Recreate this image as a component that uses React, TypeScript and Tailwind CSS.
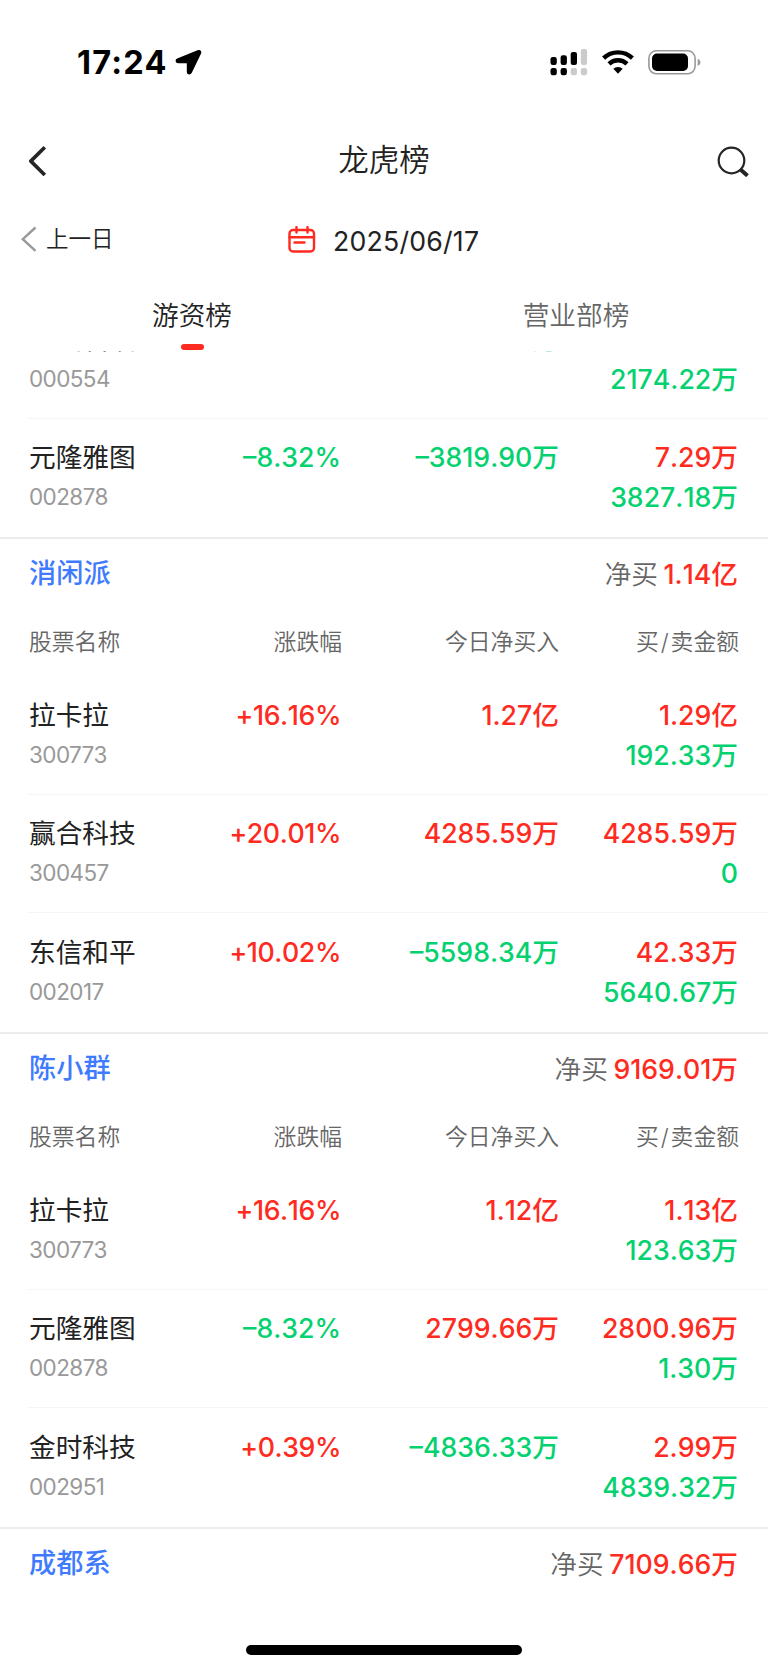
interface IStock {
  name: string;
  code: string;
  change: string;
  net: string;
  buy: string;
  sell: string;
}

interface IGroup {
  name: string;
  total: string;
  stocks: IStock[];
}

const previousStocks: IStock[] = [
  { name: "泰山石油", code: "000554", change: "", net: "–2174.22万", buy: "", sell: "2174.22万" },
  { name: "元隆雅图", code: "002878", change: "–8.32%", net: "–3819.90万", buy: "7.29万", sell: "3827.18万" },
];

const groups: IGroup[] = [
  {
    name: "消闲派",
    total: "1.14亿",
    stocks: [
      { name: "拉卡拉", code: "300773", change: "+16.16%", net: "1.27亿", buy: "1.29亿", sell: "192.33万" },
      { name: "赢合科技", code: "300457", change: "+20.01%", net: "4285.59万", buy: "4285.59万", sell: "0" },
      { name: "东信和平", code: "002017", change: "+10.02%", net: "–5598.34万", buy: "42.33万", sell: "5640.67万" },
    ],
  },
  {
    name: "陈小群",
    total: "9169.01万",
    stocks: [
      { name: "拉卡拉", code: "300773", change: "+16.16%", net: "1.12亿", buy: "1.13亿", sell: "123.63万" },
      { name: "元隆雅图", code: "002878", change: "–8.32%", net: "2799.66万", buy: "2800.96万", sell: "1.30万" },
      { name: "金时科技", code: "002951", change: "+0.39%", net: "–4836.33万", buy: "2.99万", sell: "4839.32万" },
    ],
  },
  { name: "成都系", total: "7109.66万", stocks: [] },
];

const isDown = (value: string) => value.startsWith("–");

const Amount = ({ value, down }: { value: string; down: boolean }) => (
  <span
    className={`block min-h-[40px] text-right text-[26.7px] leading-[40px] font-[460] whitespace-nowrap [font-kerning:none] ${
      down ? "text-[#04d16f]" : "text-[#ff2a20]"
    } ${value.startsWith("+") ? "tracking-[-0.4px]" : ""}`}
  >
    {value}
  </span>
);

const StatusBar = () => (
  <div className="flex h-[116px] items-start justify-between pt-[42px] pr-[67px] pl-[77px]">
    <div className="flex items-center">
      <span className="w-[98px] text-[32.5px] leading-[41px] font-bold tracking-[1.2px] text-black">
        17:24
      </span>
      <svg width="27" height="27" viewBox="0 0 27 27">
        <path
          d="M23.6 2.2 2.6 10.7c-1.3.5-1 2.4.5 2.4h9.2c.4 0 .7.3.7.7v9.2c0 1.5 2 1.8 2.6.4L25 3.9c.5-1.1-.4-2.1-1.4-1.7Z"
          stroke="#000"
          strokeWidth="2.4"
          strokeLinejoin="round"
        />
      </svg>
    </div>
    <div className="flex items-center pt-[7px]">
      <svg width="38" height="27" viewBox="0 0 38 27">
        <rect x="0.5" y="8" width="6.3" height="8" rx="2.2" />
        <rect x="10.6" y="6.3" width="6.3" height="9.7" rx="2.2" />
        <rect x="20.7" y="3" width="6.3" height="13" rx="2.2" />
        <rect x="30.8" y="0" width="6.3" height="16" rx="2.2" fill="#cbcbcb" />
        <rect x="0.5" y="19" width="6.3" height="7.3" rx="2.2" />
        <rect x="10.6" y="19" width="6.3" height="7.3" rx="2.2" />
        <rect x="20.7" y="19" width="6.3" height="7.3" rx="2.2" fill="#cbcbcb" />
        <rect x="30.8" y="19" width="6.3" height="7.3" rx="2.2" fill="#cbcbcb" />
      </svg>
      <svg className="ml-[14px]" width="32" height="27" viewBox="0 0 32 27" fill="none" stroke="#000">
        <path d="M1.6 9.2a20.7 20.7 0 0 1 28.8 0" strokeWidth="4.4" />
        <path d="M7 14.9a13 13 0 0 1 18 0" strokeWidth="4.4" />
        <path d="M11.3 19.8a6.8 6.8 0 0 1 9.4 0L16 24.7Z" fill="#000" stroke="none" />
      </svg>
      <svg className="ml-[14px]" width="53" height="27" viewBox="0 0 53 27">
        <rect x="0.9" y="1.8" width="46.2" height="23" rx="7.5" fill="none" stroke="#999" strokeWidth="1.6" />
        <rect x="4" y="4.6" width="36" height="17.4" rx="5" />
        <path d="M49.7 9.7c1.7.7 2.7 2 2.7 3.6s-1 2.9-2.7 3.6Z" fill="#999" />
      </svg>
    </div>
  </div>
);

const TitleBar = () => (
  <div className="grid h-[88px] grid-cols-3 items-center px-[17px]">
    <svg className="ml-[10px]" width="32" height="32" viewBox="0 0 32 32" fill="none" stroke="#252525" strokeWidth="3.6">
      <path d="M17.8 3.3 3.8 17.1l14 13.9" strokeLinejoin="round" />
    </svg>
    <h1 className="pb-px text-center text-[30.5px] font-[350] text-[#222]">龙虎榜</h1>
    <svg className="justify-self-end" width="34" height="34" viewBox="0 0 34 34" fill="none" stroke="#252525">
      <circle cx="14.5" cy="17.5" r="12.8" strokeWidth="2.2" />
      <path d="m23.5 26.5 7 6.2" strokeWidth="4" />
    </svg>
  </div>
);

const DateBar = () => (
  <div className="grid h-[70px] grid-cols-[288px_1fr] items-center">
    <button className="flex items-center pl-[21px]">
      <svg width="16" height="26" viewBox="0 0 16 26" fill="none" stroke="#999" strokeWidth="2.4">
        <path d="M14.5 1.5 1.8 13.2l12.7 11.6" />
      </svg>
      <span className="ml-[9px] text-[22.5px] font-[350] text-[#222]">上一日</span>
    </button>
    <div className="flex items-center">
      <svg className="mt-[2px]" width="28" height="28" viewBox="0 0 28 28" fill="none" stroke="#ff2a20" strokeWidth="2.4">
        <rect x="1.5" y="4" width="24.5" height="21.5" rx="3.5" />
        <path d="M1.5 11.2H26M8.5 1v5.5M19.5 1v5.5M6.5 16.5h10" strokeLinecap="round" />
      </svg>
      <span className="ml-[17px] pt-1 text-[26.7px] font-normal tracking-[0.2px] text-[#222] [font-kerning:none]">
        2025/06/17
      </span>
    </div>
  </div>
);

const Tabs = () => (
  <div className="grid h-[77px] grid-cols-2 text-center text-[26.7px] leading-[40px] font-[350]">
    <div className="flex flex-col items-center pt-[21px] text-[#222]">
      游资榜
      <span className="mt-[9px] h-[6px] w-[23px] shrink-0 rounded-full bg-[#ff2a20]" />
    </div>
    <div className="pt-[21px] text-[#666]">营业部榜</div>
  </div>
);

const StockRow = ({ stock, last }: { stock: IStock; last: boolean }) => (
  <div className="pl-[28px]">
    <div
      className={`grid h-[118.6px] grid-cols-[150px_163px_218px_179px] border-b pt-[18.5px] ${
        last ? "border-transparent" : "border-[#f6f6f6]"
      }`}
    >
      <div className="pl-px">
        <div className="text-[26.7px] leading-[40px] text-[#222]">{stock.name}</div>
        <div className="text-[22.5px] leading-[40px] font-normal tracking-[-0.6px] text-[#999]">{stock.code}</div>
      </div>
      <Amount value={stock.change} down={isDown(stock.change)} />
      <Amount value={stock.net} down={isDown(stock.net)} />
      <div>
        <Amount value={stock.buy} down={false} />
        <Amount value={stock.sell} down />
      </div>
    </div>
  </div>
);

const Group = ({ group }: { group: IGroup }) => (
  <section className="h-[495px] border-t-2 border-[#ececee]">
    <div className="flex h-[69px] items-center justify-between pr-[30px] pl-[29px] text-[26.7px]">
      <h2 className="pt-[2px] text-[27.2px] font-[450] text-[#3f7bff]">{group.name}</h2>
      <div className="font-medium text-[#ff2a20] [font-kerning:none]">
        <span className="mr-[5.5px] font-[350] text-[#666]">净买</span>
        {group.total}
      </div>
    </div>
    {group.stocks.length > 0 && (
      <div className="grid h-[68px] grid-cols-[150px_164px_217px_180px] pt-[14px] pl-[28px] text-right text-[22.8px] leading-[40px] font-[350] text-[#666]">
        <span className="pl-px text-left">股票名称</span>
        <span>涨跌幅</span>
        <span>今日净买入</span>
        <span>
          买<span className="mx-[2px]">/</span>卖金额
        </span>
      </div>
    )}
    {group.stocks.map((stock, index) => (
      <StockRow key={stock.code} stock={stock} last={index === group.stocks.length - 1} />
    ))}
  </section>
);

const App = () => {
  return (
    <div className="relative flex h-[1670px] w-[768px] flex-col overflow-hidden bg-white font-['Inter','Noto_Sans_CJK_SC',sans-serif]">
      <header className="shrink-0">
        <StatusBar />
        <TitleBar />
        <DateBar />
        <Tabs />
      </header>
      <main className="min-h-0 flex-1 overflow-hidden">
        <div className="-mt-[51px]">
          {previousStocks.map((stock, index) => (
            <StockRow key={stock.code} stock={stock} last={index === 1} />
          ))}
          {groups.map((group) => (
            <Group key={group.name} group={group} />
          ))}
        </div>
      </main>
      <div className="absolute bottom-[15px] left-[246px] h-[10px] w-[276px] rounded-full bg-black" />
    </div>
  );
};

export default App;
